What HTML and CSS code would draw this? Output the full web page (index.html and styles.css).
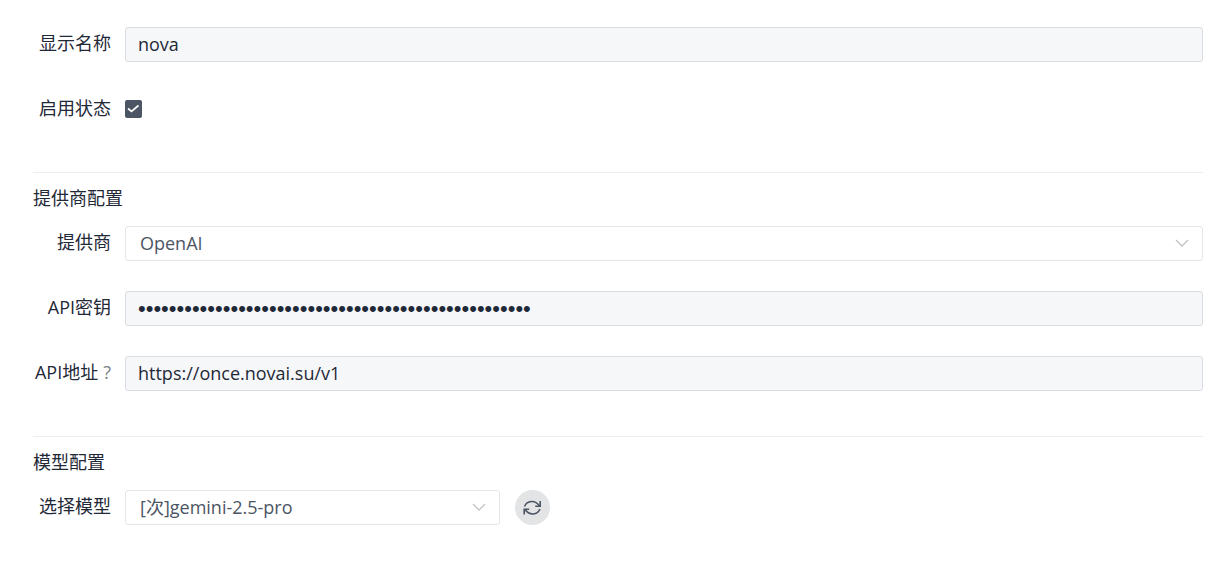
FILE: index.html
```html
<!DOCTYPE html>
<html lang="zh-CN">
<head>
    <meta charset="UTF-8">
    <meta name="viewport" content="width=device-width, initial-scale=1.0">
    <title>nova</title>
    <link rel="stylesheet" href="styles.css">
</head>
<body>

    <form class="settings">
        <div class="row">
            <label class="label" for="name">显示名称</label>
            <input class="control" type="text" id="name" value="nova">
        </div>
        <div class="row">
            <label class="label" for="enabled">启用状态</label>
            <span class="check">
                <input type="checkbox" id="enabled" checked>
                <svg viewBox="0 0 17 18" aria-hidden="true"><path d="M3 8.5 L6.5 11.5 L13.5 5.5"/></svg>
            </span>
        </div>

        <section class="group">
            <h2>提供商配置</h2>
            <div class="row">
                <label class="label" for="provider">提供商</label>
                <div class="select">
                    <select class="control" id="provider">
                        <option>OpenAI</option>
                    </select>
                    <svg viewBox="0 0 14 14" aria-hidden="true"><path d="M1 4 L7 10 L13 4"/></svg>
                </div>
            </div>
            <div class="row">
                <label class="label" for="key">API密钥</label>
                <input class="control" type="password" id="key" value="000000000000000000000000000000000000000000000000000">
            </div>
            <div class="row">
                <label class="label" for="url">API地址<span class="hint">?</span></label>
                <input class="control" type="text" id="url" value="https://once.novai.su/v1">
            </div>
        </section>

        <section class="group">
            <h2>模型配置</h2>
            <div class="row">
                <label class="label" for="model">选择模型</label>
                <div class="select model">
                    <select class="control" id="model">
                        <option>[次]gemini-2.5-pro</option>
                    </select>
                    <svg viewBox="0 0 14 14" aria-hidden="true"><path d="M1 4 L7 10 L13 4"/></svg>
                </div>
                <button type="button" class="refresh" aria-label="刷新">
                    <svg viewBox="0 0 20 18" aria-hidden="true">
                        <path d="M1.5 7.5 C4 1.5 12 0.5 16.5 7"/>
                        <path d="M17.2 2 V7.3 H12.2"/>
                        <path d="M17 10 C14.5 16 6.5 17 2 10.5"/>
                        <path d="M1.2 15.5 V10.2 H6.2"/>
                    </svg>
                </button>
            </div>
        </section>
    </form>

</body>
</html>
```

FILE: styles.css
```css
* {
    margin: 0;
    padding: 0;
    box-sizing: border-box;
}
body {
    font-family: "Open Sans", "Noto Sans CJK SC", sans-serif;
    font-size: 18px;
    line-height: 26px;
    color: #1f2937;
    background-color: #fff;
}
.settings {
    padding: 27px 15px 27px 33px;
}
.row {
    display: flex;
    align-items: center;
    height: 35px;
    margin-bottom: 30px;
}
.label {
    flex: none;
    width: 78px;
    margin-right: 14px;
    padding-bottom: 3px;
    display: flex;
    justify-content: flex-end;
    white-space: nowrap;
}
.hint {
    margin-left: 5px;
    color: #7b7f86;
}
.control {
    flex: 1;
    min-width: 0;
    width: 100%;
    height: 35px;
    padding: 0 12px 2px;
    font: inherit;
    color: #1f2937;
    background-color: #f6f7f9;
    border: 1px solid #d9dce1;
    border-radius: 3px;
    outline: none;
}
input[type="password"] {
    padding-bottom: 0;
    font-family: "Liberation Sans", sans-serif;
    font-size: 22px;
}
.check,
.select {
    position: relative;
    display: flex;
}
.check {
    margin-bottom: 1px;
}
.check input {
    appearance: none;
    width: 17px;
    height: 18px;
    background-color: #4b5563;
    border-radius: 2px;
}
.check svg {
    position: absolute;
    inset: 0;
    width: 17px;
    height: 18px;
    fill: none;
    stroke: #fff;
    stroke-width: 1.7;
    pointer-events: none;
}
.check input:not(:checked) + svg {
    display: none;
}
.select {
    flex: 1;
}
.select.model {
    flex: 0 1 375px;
}
.select .control {
    appearance: none;
    padding: 0 40px 2px 14px;
    color: #4b5563;
    background-color: #fff;
    border-color: #e4e6ea;
}
.select svg {
    position: absolute;
    top: 10px;
    right: 14px;
    width: 14px;
    height: 14px;
    fill: none;
    stroke: #c0c2c6;
    stroke-width: 1.3;
    pointer-events: none;
}
.group {
    margin-top: 45px;
    border-top: 1px solid #eceef0;
}
.group h2 {
    margin: 12px 0 15px;
    font-size: 18px;
    font-weight: 400;
}
.group .row:last-child {
    margin-bottom: 0;
}
.row:has(+ .group) {
    margin-bottom: 0;
}
.refresh {
    flex: none;
    display: flex;
    align-items: center;
    justify-content: center;
    width: 35px;
    height: 35px;
    margin-left: 15px;
    background-color: #e3e4e6;
    border: none;
    border-radius: 50%;
    cursor: pointer;
}
.refresh svg {
    width: 20px;
    height: 18px;
    fill: none;
    stroke: #4b5563;
    stroke-width: 1.6;
}
```
